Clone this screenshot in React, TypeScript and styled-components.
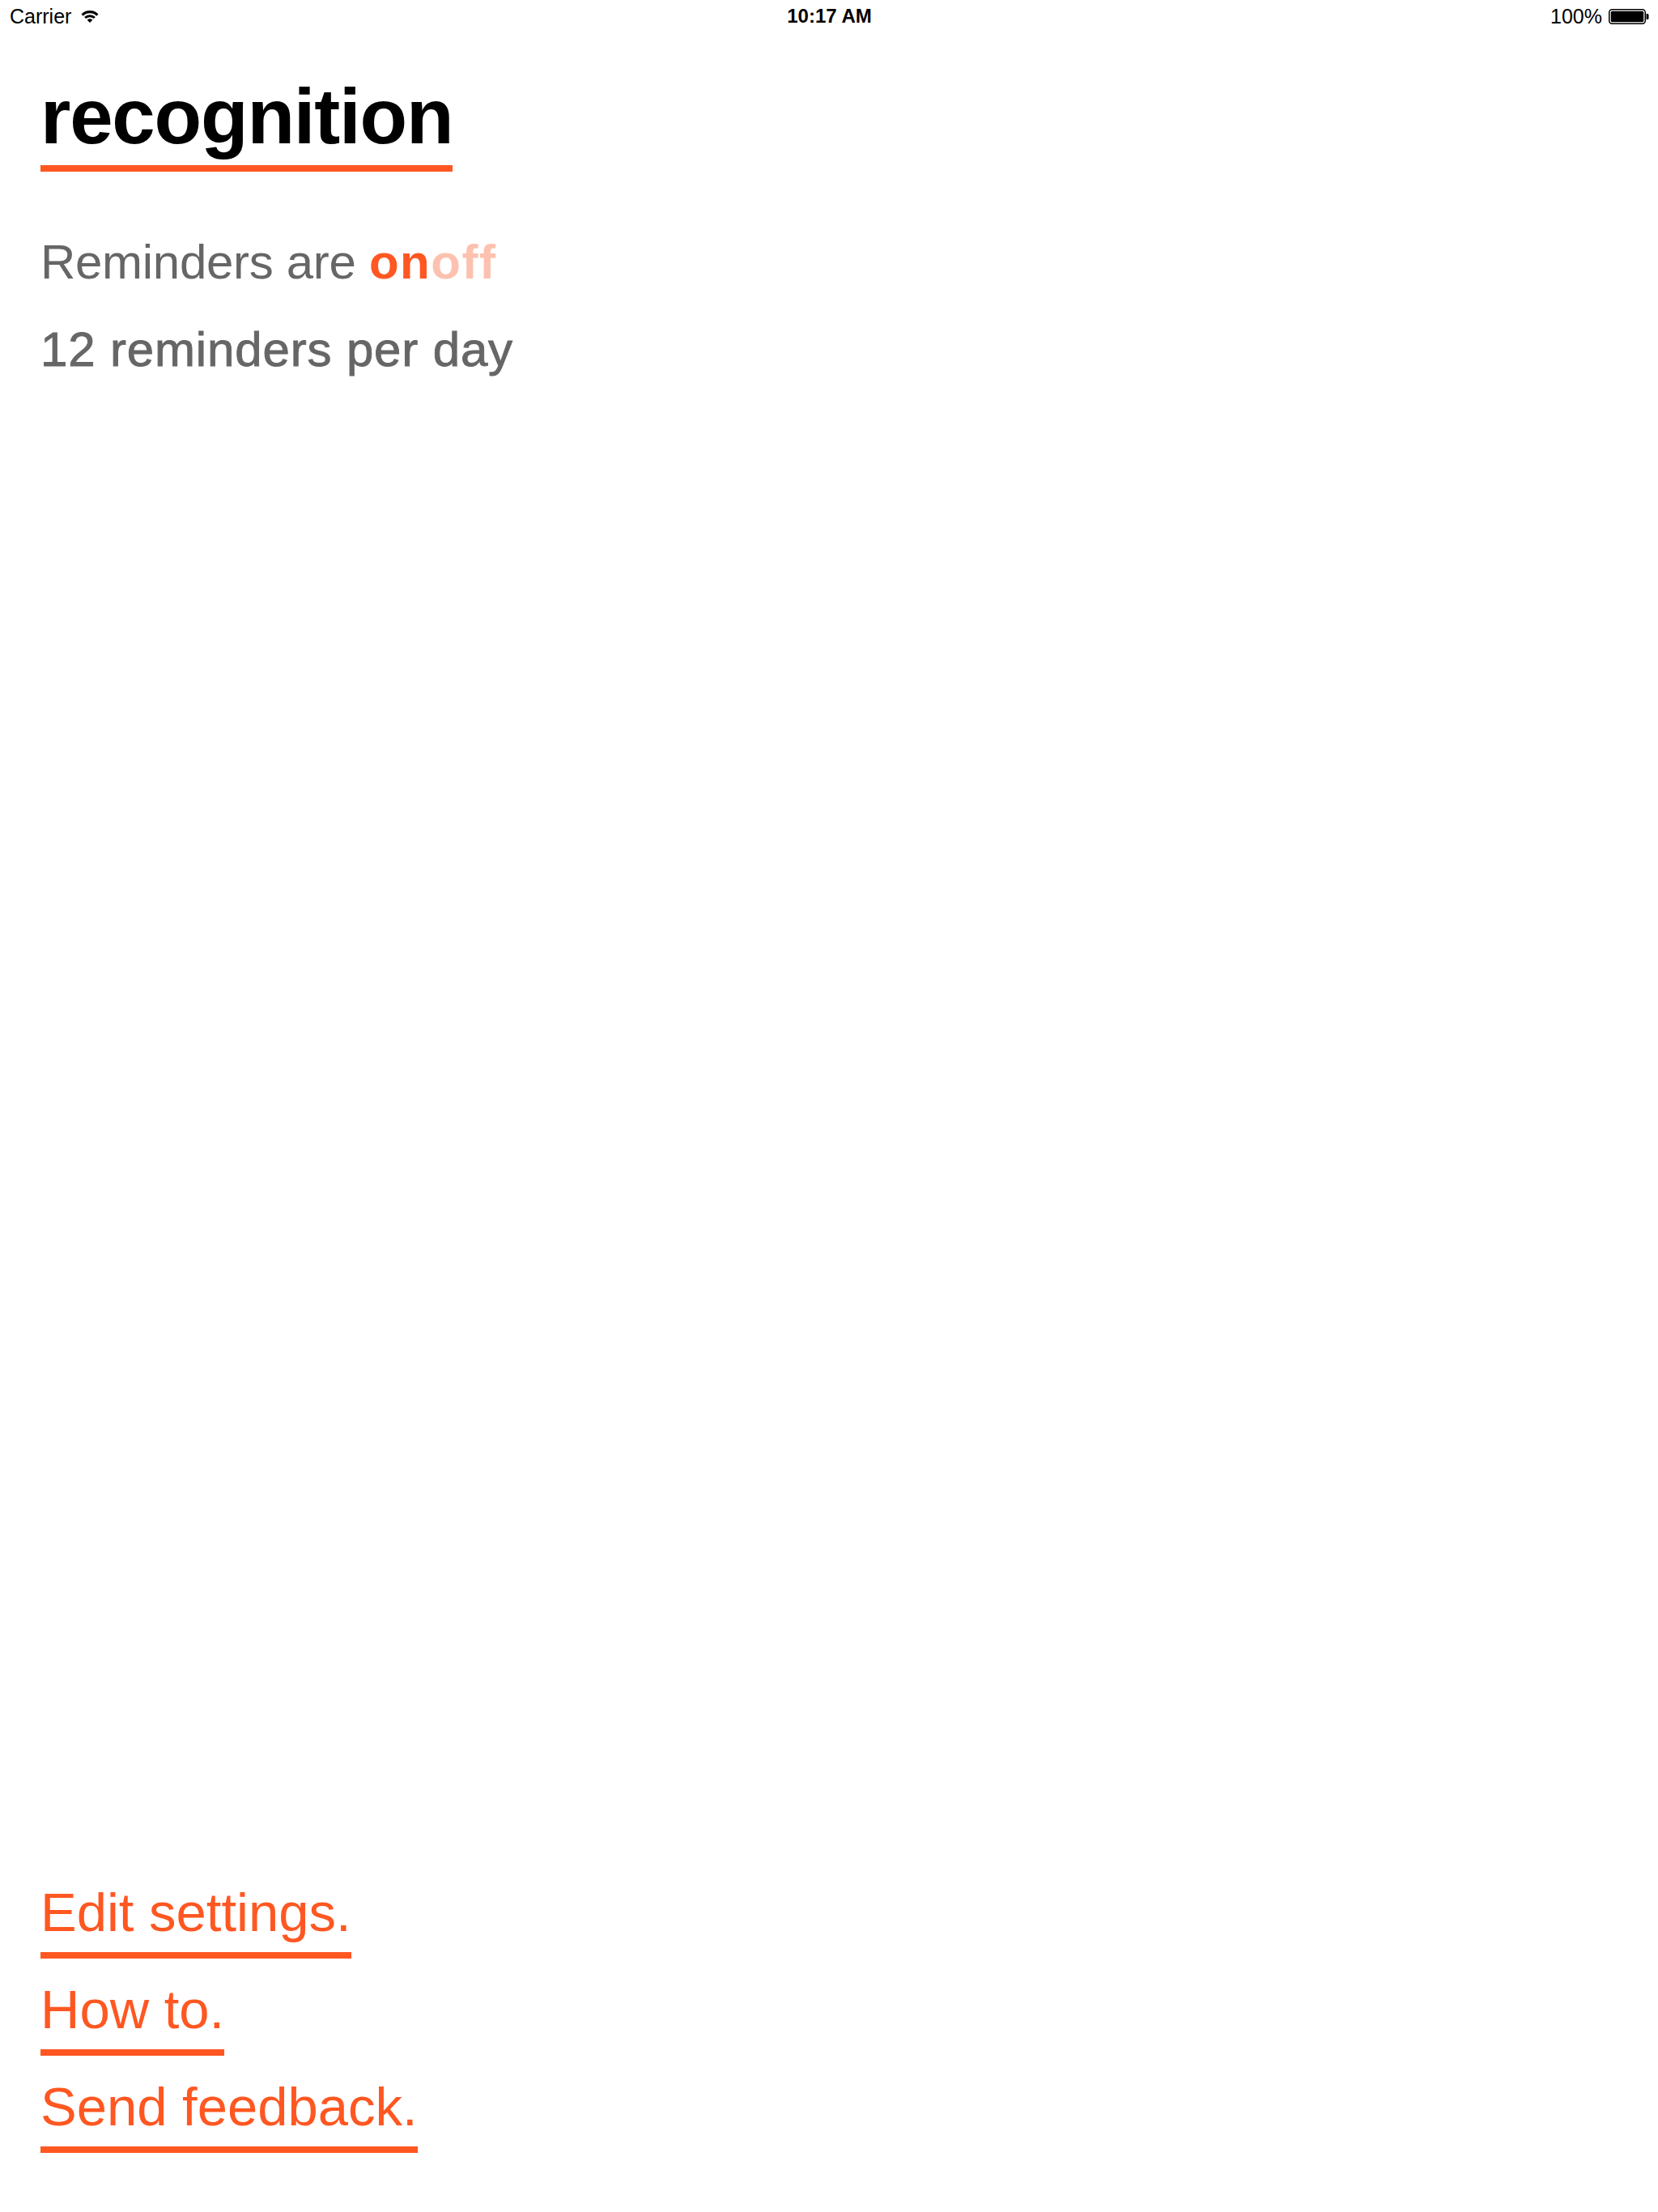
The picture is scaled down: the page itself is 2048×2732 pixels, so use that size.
import React from "react";
import styled, { createGlobalStyle } from "styled-components";

const ORANGE = "#FF5722";
const ORANGE_FADED = "#FCC2AF";
const GREY = "#666666";

const GlobalStyle = createGlobalStyle`
  html, body {
    margin: 0;
    padding: 0;
    background: #ffffff;
  }
  body {
    font-family: "Liberation Sans", Arial, sans-serif;
    -webkit-font-smoothing: antialiased;
  }
`;

const Screen = styled.div`
  width: 2048px;
  height: 2732px;
  display: flex;
  flex-direction: column;
  background: #ffffff;
  overflow: hidden;
`;

const StatusBar = styled.header`
  height: 40px;
  display: grid;
  grid-template-columns: 1fr auto 1fr;
  align-items: center;
  padding: 0 11px 0 12px;
  font-size: 25px;
  color: #000;
`;

const StatusLeft = styled.div`
  display: flex;
  align-items: center;
  gap: 10px;
`;

const StatusRight = styled.div`
  display: flex;
  align-items: center;
  justify-content: flex-end;
  gap: 8px;
`;

const Clock = styled.div`
  font-size: 24px;
  font-weight: 700;
  letter-spacing: 0px;
`;

const Content = styled.main`
  flex: 1;
  display: flex;
  flex-direction: column;
  justify-content: space-between;
  padding: 56px 0 73px 50px;
`;

const Top = styled.section`
  display: flex;
  flex-direction: column;
  align-items: flex-start;
`;

const Title = styled.h1`
  margin: 0;
  font-size: 96px;
  line-height: 96px;
  font-weight: 700;
  letter-spacing: -1.2px;
  color: #000;
  padding-bottom: 12px;
  border-bottom: 8px solid ${ORANGE};
`;

const Settings = styled.div`
  margin-top: 82px;
  display: flex;
  flex-direction: column;
  gap: 48px;
`;

const SettingLine = styled.p<{ $medium?: boolean }>`
  margin: 0;
  font-size: 60px;
  line-height: 60px;
  color: ${GREY};
  letter-spacing: ${(p) => (p.$medium ? "0.85px" : "-0.3px")};
  -webkit-text-stroke: ${(p) => (p.$medium ? `0.9px ${GREY}` : "0")};
`;

const State = styled.span<{ $active: boolean }>`
  font-weight: 700;
  letter-spacing: 1.5px;
  color: ${(p) => (p.$active ? ORANGE : ORANGE_FADED)};
`;

const Links = styled.nav`
  display: flex;
  flex-direction: column;
  align-items: flex-start;
  gap: 29px;
`;

const LinkButton = styled.a`
  display: block;
  font-size: 67px;
  line-height: 67px;
  color: ${ORANGE};
  text-decoration: none;
  letter-spacing: 0px;
  padding-bottom: 16px;
  border-bottom: 8px solid ${ORANGE};
  cursor: pointer;
`;

const Wifi = () => (
  <svg width="26" height="17" viewBox="0 0 24 16" aria-hidden="true">
    <path d="M2.1 5.1 A14 14 0 0 1 21.9 5.1 L19.78 7.22 A11 11 0 0 0 4.22 7.22 Z" fill="#000" />
    <path d="M5.5 8.5 A9.2 9.2 0 0 1 18.5 8.5 L16.53 10.47 A6.4 6.4 0 0 0 7.47 10.47 Z" fill="#000" />
    <path d="M12 15 L8.89 11.89 A4.4 4.4 0 0 1 15.11 11.89 Z" fill="#000" />
  </svg>
);

const Battery = () => (
  <svg width="50" height="19" viewBox="0 0 50 19" aria-hidden="true">
    <rect x="0.75" y="0.75" width="44.5" height="17.5" rx="3.5" fill="none" stroke="#000" strokeWidth="1.5" />
    <rect x="2.75" y="2.75" width="40.5" height="13.5" rx="1.5" fill="#000" />
    <path d="M46.5 6 h1.5 a1.5 1.5 0 0 1 1.5 1.5 v4 a1.5 1.5 0 0 1 -1.5 1.5 h-1.5 Z" fill="#000" />
  </svg>
);

export default function App() {
  return (
    <>
      <GlobalStyle />
      <Screen>
        <StatusBar>
          <StatusLeft>
            <span>Carrier</span>
            <Wifi />
          </StatusLeft>
          <Clock>10:17 AM</Clock>
          <StatusRight>
            <span>100%</span>
            <Battery />
          </StatusRight>
        </StatusBar>
        <Content>
          <Top>
            <Title>recognition</Title>
            <Settings>
              <SettingLine>
                Reminders are <State $active>on</State>
                <State $active={false}>off</State>
              </SettingLine>
              <SettingLine $medium>12 reminders per day</SettingLine>
            </Settings>
          </Top>
          <Links>
            <LinkButton>Edit settings.</LinkButton>
            <LinkButton>How to.</LinkButton>
            <LinkButton>Send feedback.</LinkButton>
          </Links>
        </Content>
      </Screen>
    </>
  );
}
